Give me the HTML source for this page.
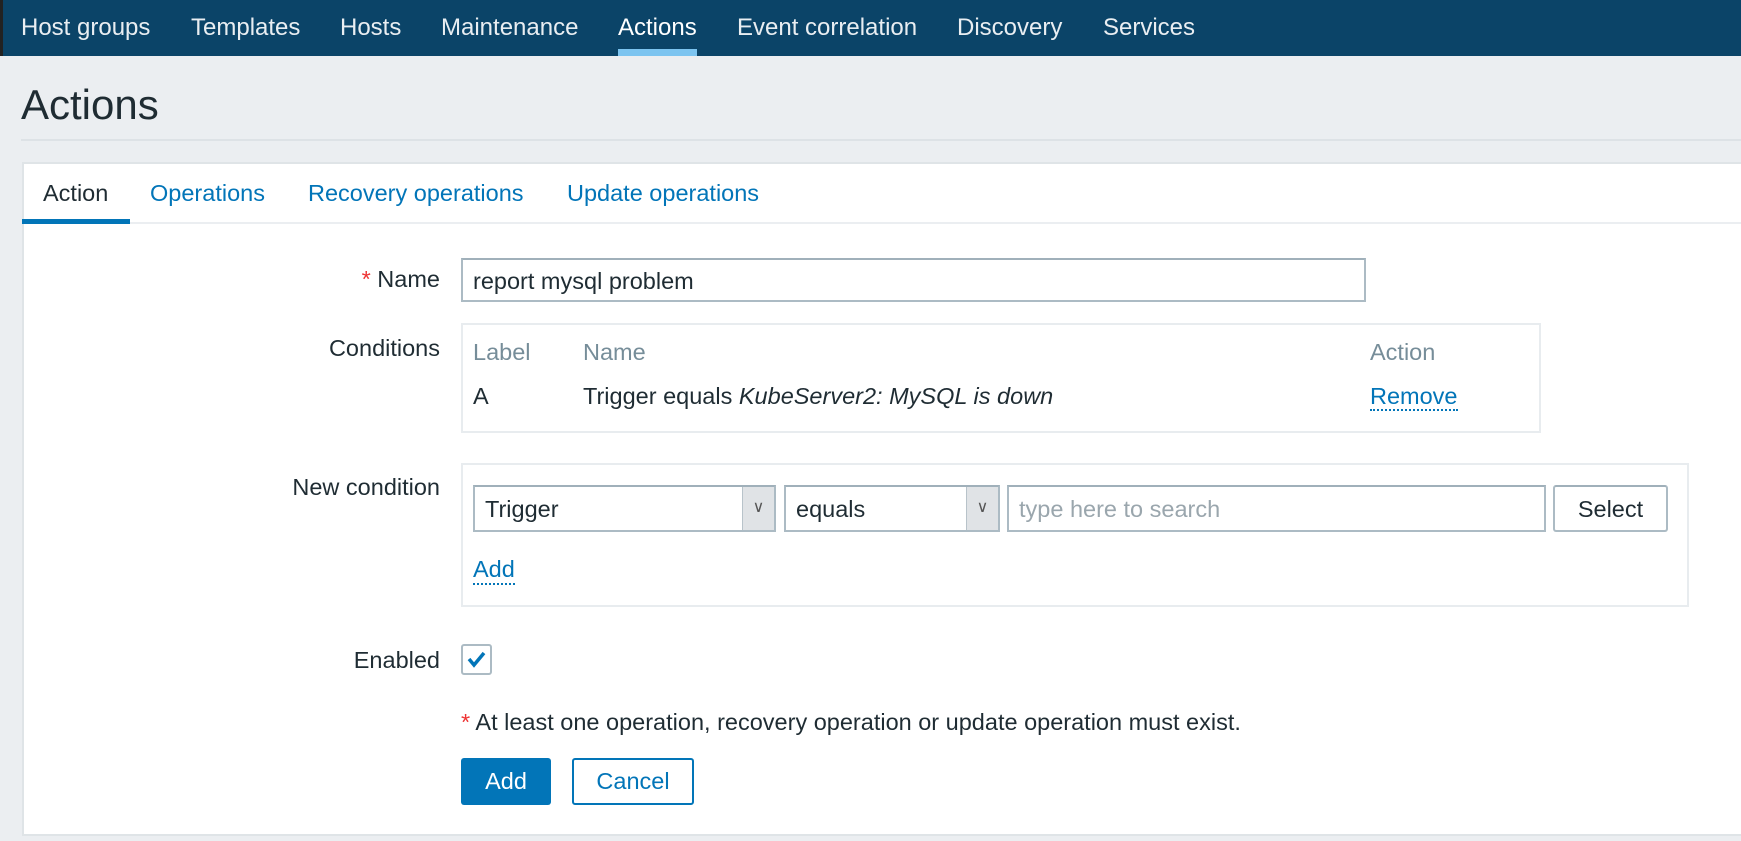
<!DOCTYPE html>
<html><head><meta charset="utf-8"><style>
*{box-sizing:border-box;margin:0;padding:0}
body{width:1741px;height:841px;overflow:hidden;background:#ebeef1;font-family:"Liberation Sans",Arial,sans-serif;font-size:23.5px;color:#1f2c33;position:relative}
.a{position:absolute;white-space:nowrap}
.nav{position:absolute;left:0;top:0;width:1741px;height:56px;background:#0b4468;border-left:3px solid #222}
.nav span{position:absolute;top:14px;color:#e9eef2;font-size:24px}
.lbl{position:absolute;right:1301px;text-align:right;white-space:nowrap}
.link{color:#0275b8}
.dot{border-bottom:2px dotted #0275b8}
.inp{position:absolute;background:#fff;border:2px solid #acbbc4;border-top-color:#a0b0ba}
.arr{position:absolute;top:0;right:0;width:32px;height:100%;background:#e0e3e6;border-left:1px solid #b8c3ca;color:#555;font-size:16px;text-align:center;line-height:42px}
</style></head><body>
<div class="nav">
<span style="left:18px">Host groups</span>
<span style="left:188px">Templates</span>
<span style="left:337px">Hosts</span>
<span style="left:438px">Maintenance</span>
<span style="left:615px;color:#fff">Actions</span>
<span style="left:734px">Event correlation</span>
<span style="left:954px">Discovery</span>
<span style="left:1100px">Services</span>
<div style="position:absolute;left:615px;top:49px;width:79px;height:7px;background:#7cc4f0"></div>
</div>
<div class="a" style="left:21px;top:81px;font-size:42px;color:#1f2c33">Actions</div>
<div style="position:absolute;left:21px;top:139px;width:1720px;height:2px;background:#dde2e6"></div>
<div style="position:absolute;left:22px;top:162px;width:1730px;height:674px;background:#fff;border:2px solid #dfe4e7"></div>
<div style="position:absolute;left:22px;top:222px;width:1719px;height:2px;background:#ebeef1"></div>
<div style="position:absolute;left:22px;top:219px;width:108px;height:5px;background:#0275b8"></div>
<div class="a" style="left:43px;top:180px">Action</div>
<div class="a link" style="left:150px;top:180px">Operations</div>
<div class="a link" style="left:308px;top:180px">Recovery operations</div>
<div class="a link" style="left:567px;top:180px">Update operations</div>

<div class="lbl" style="top:266px"><span style="color:#e33">*</span> Name</div>
<div class="inp" style="left:461px;top:258px;width:905px;height:44px;padding:8px 10px">report mysql problem</div>

<div class="lbl" style="top:335px">Conditions</div>
<div style="position:absolute;left:461px;top:323px;width:1080px;height:110px;border:2px solid #e8ecef"></div>
<div class="a" style="left:473px;top:339px;color:#768d99">Label</div>
<div class="a" style="left:583px;top:339px;color:#768d99">Name</div>
<div class="a" style="left:1370px;top:339px;color:#768d99">Action</div>
<div class="a" style="left:473px;top:383px">A</div>
<div class="a" style="left:583px;top:383px">Trigger equals <i>KubeServer2: MySQL is down</i></div>
<div class="a link dot" style="left:1370px;top:383px;line-height:26px">Remove</div>

<div class="lbl" style="top:474px">New condition</div>
<div style="position:absolute;left:461px;top:463px;width:1228px;height:144px;border:2px solid #e8ecef"></div>
<div class="inp" style="left:473px;top:485px;width:303px;height:47px;padding:9px 10px">Trigger<div class="arr">&#8744;</div></div>
<div class="inp" style="left:784px;top:485px;width:216px;height:47px;padding:9px 10px">equals<div class="arr">&#8744;</div></div>
<div class="inp" style="left:1007px;top:485px;width:539px;height:47px;padding:9px 10px;color:#9aa6ad">type here to search</div>
<div class="inp" style="left:1553px;top:485px;width:115px;height:47px;text-align:center;padding-top:9px;border-radius:3px">Select</div>
<div class="a link dot" style="left:473px;top:556px;line-height:27px">Add</div>

<div class="lbl" style="top:647px">Enabled</div>
<div style="position:absolute;left:461px;top:644px;width:31px;height:31px;border:2px solid #acbbc4;border-radius:3px">
<svg width="27" height="27" viewBox="0 0 27 27"><path d="M6 13 L11 19 L21 7" fill="none" stroke="#0275b8" stroke-width="3.5"/></svg></div>

<div class="a" style="left:461px;top:709px"><span style="color:#e33">*</span> At least one operation, recovery operation or update operation must exist.</div>
<div style="position:absolute;left:461px;top:758px;width:90px;height:47px;background:#0275b8;border-radius:3px;color:#fff;text-align:center;line-height:47px">Add</div>
<div style="position:absolute;left:572px;top:758px;width:122px;height:47px;border:2px solid #0275b8;border-radius:3px;color:#0275b8;text-align:center;line-height:43px">Cancel</div>
</body></html>
